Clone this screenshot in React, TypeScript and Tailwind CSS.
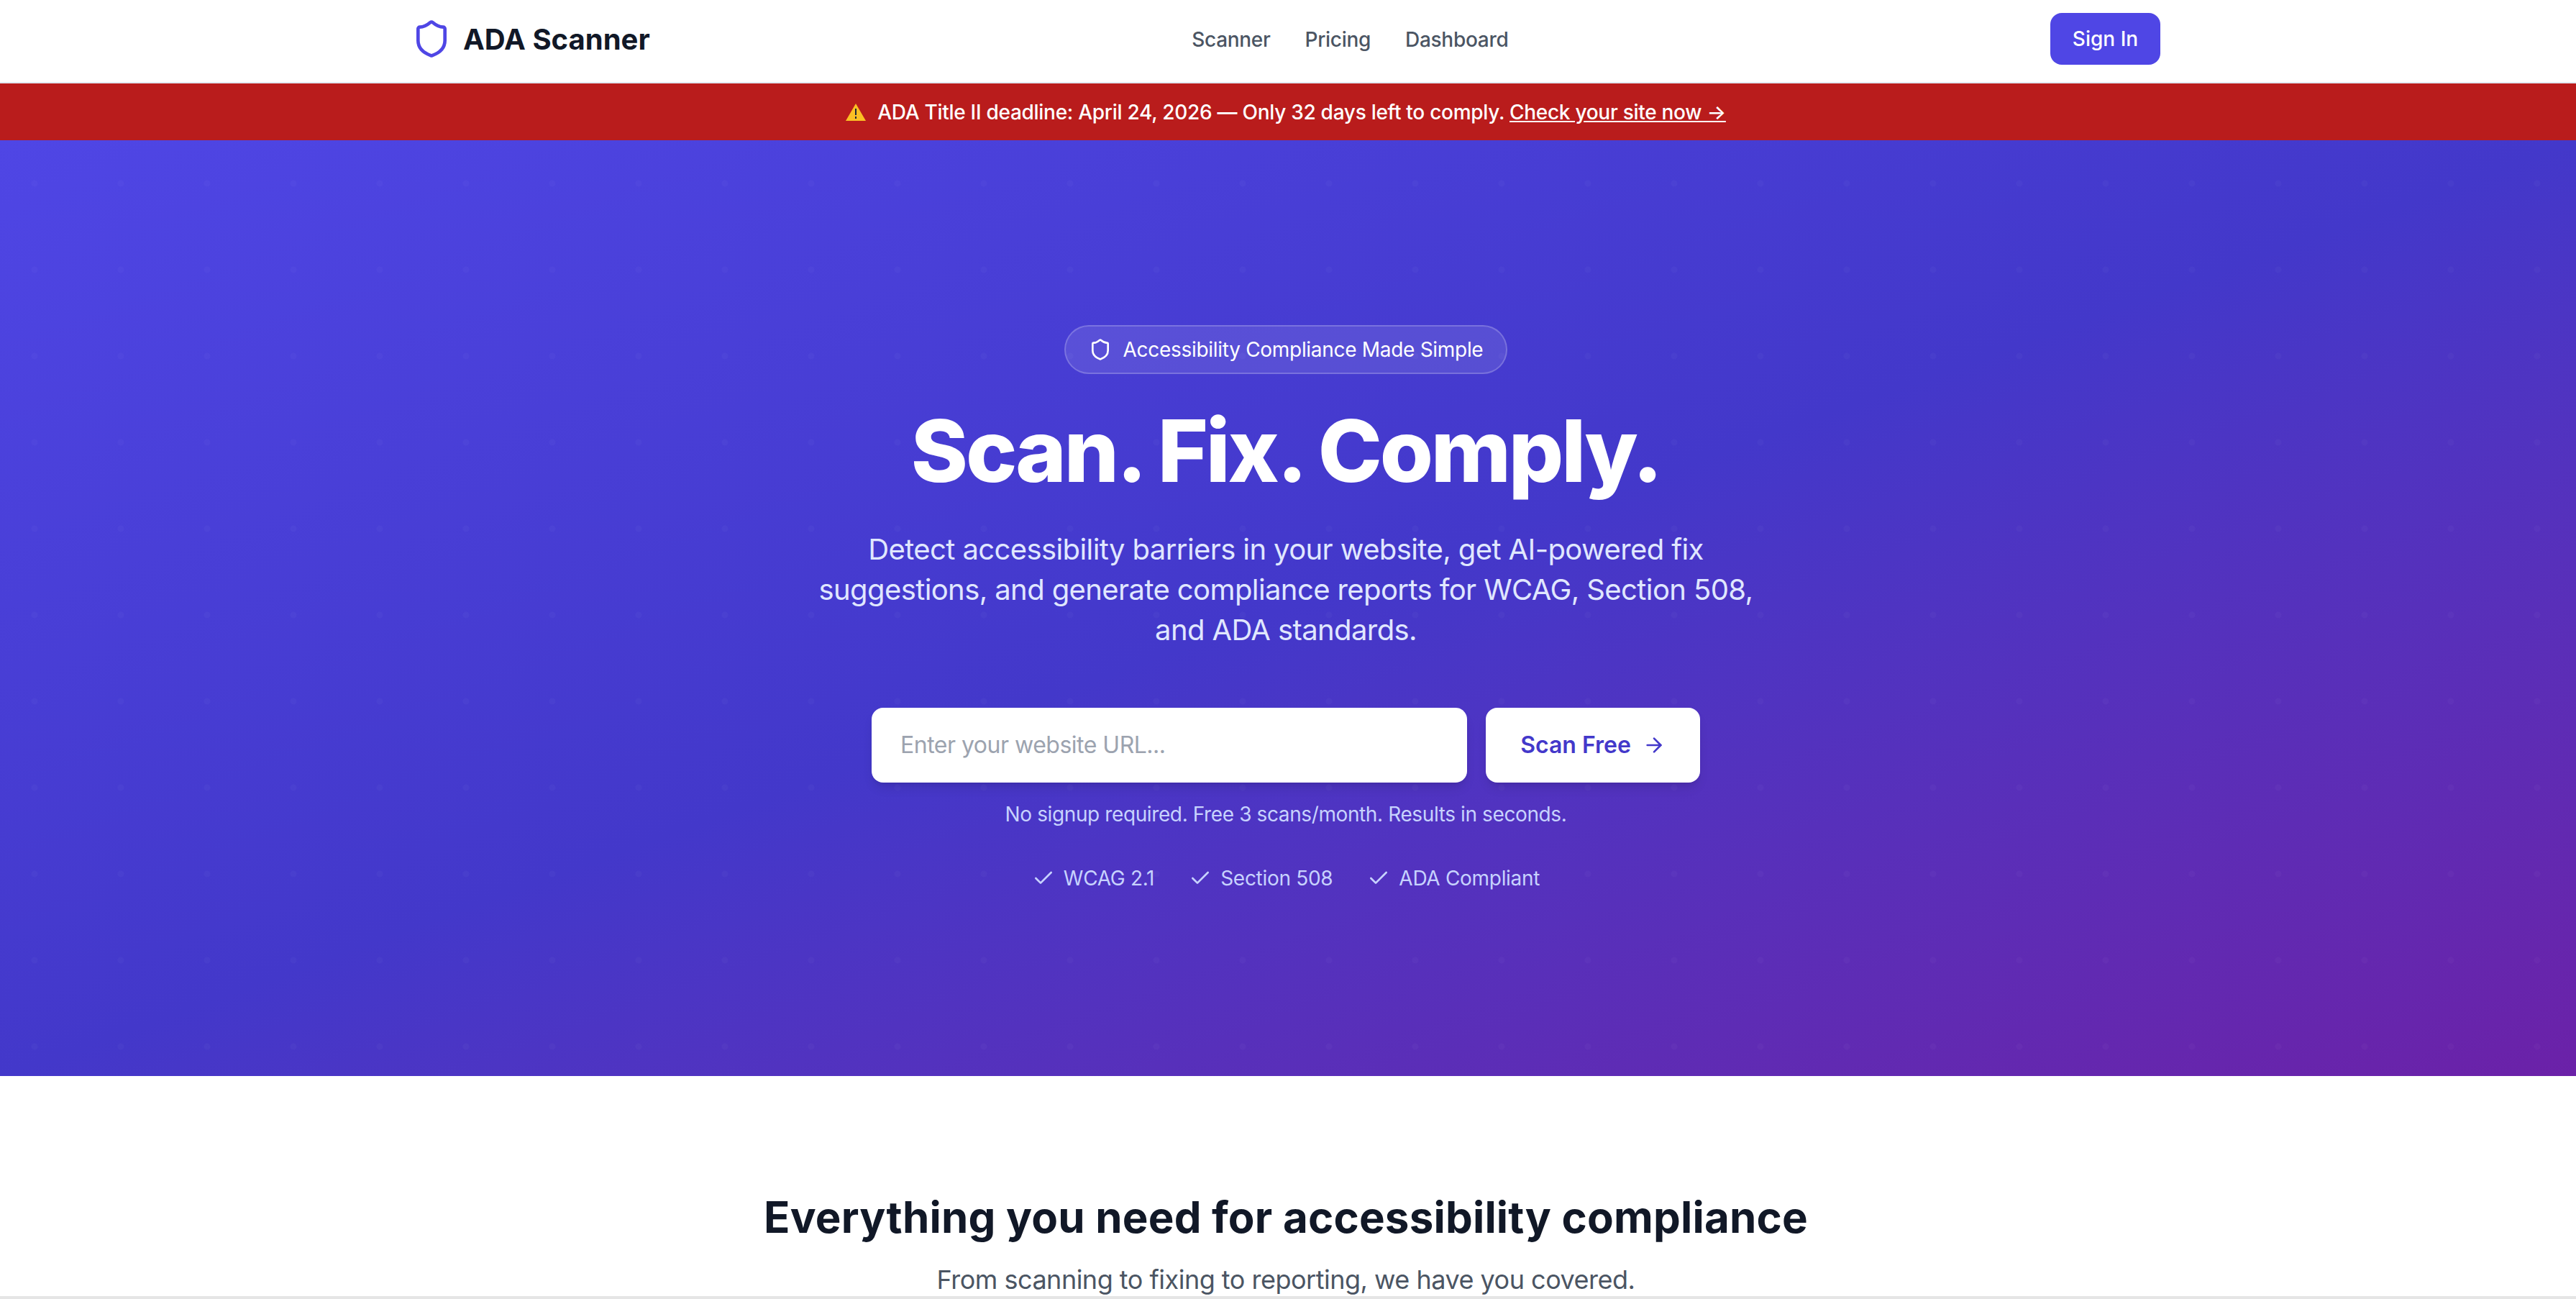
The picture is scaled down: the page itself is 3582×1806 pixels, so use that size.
import { ArrowRight, Check, Shield } from "lucide-react";

const badges = ["WCAG 2.1", "Section 508", "ADA Compliant"];

export default function App() {
  return (
    <div className="h-[1806px] overflow-hidden bg-white font-['Inter',sans-serif]">
      {/* nav */}
      <nav className="border-b-2 border-[#e2e8f0] bg-white pr-[6px]">
        <div className="mx-auto flex h-[114px] max-w-[2560px] items-center justify-between px-[64px] pb-[6px]">
          <div className="flex items-center gap-[16px]">
            <Shield className="h-[56px] w-[56px] text-[#4f46e5]" strokeWidth={2} />
            <span className="mt-[2px] text-[40px] font-bold text-[#111827]">ADA Scanner</span>
          </div>
          <div className="mt-[2px] flex items-center gap-[48px] text-[28px] font-medium tracking-[-0.3px] text-[#4b5563]">
            <a>Scanner</a>
            <a>Pricing</a>
            <a>Dashboard</a>
          </div>
          <button className="h-[72px] w-[153px] rounded-[16px] bg-[#4f46e5] text-[28px] font-medium text-white">
            Sign In
          </button>
        </div>
      </nav>

      {/* deadline banner */}
      <div className="flex h-[79px] items-center justify-center gap-[16px] bg-[#b91c1c] pr-[6px] text-[28px] font-medium tracking-[-0.28px] text-white">
        <svg viewBox="0 0 28 24" className="h-[24px] w-[28px]">
          <path d="M14 0 L28 24 L0 24 Z" fill="#fbbf24" />
          <rect x="13" y="7" width="2" height="9" fill="#1f2937" />
          <rect x="13" y="18" width="2" height="3" fill="#1f2937" />
        </svg>
        <p>
          ADA Title II deadline: April 24, 2026 — Only 32 days left to comply.{" "}
          <a className="underline">Check your site now →</a>
        </p>
      </div>

      {/* hero */}
      <section className="relative h-[1301px] bg-gradient-to-br from-[#4f46e5] via-[#4338ca] to-[#6b21a8] pt-[257px] pr-[6px] text-center text-white">
        <div className="absolute inset-0 bg-[radial-gradient(circle,rgba(255,255,255,0.025)_4px,transparent_5px)] bg-[size:120px_120px] bg-[position:-12px_0px]"></div>
        <div className="relative flex flex-col items-center">
          <div className="flex h-[68px] items-center gap-[16px] rounded-full border-2 border-white/20 bg-white/10 px-[32px] text-[28px] tracking-[-0.3px]">
            <Shield className="h-[32px] w-[32px]" strokeWidth={2} />
            Accessibility Compliance Made Simple
          </div>
          <h1 className="mt-[41px] text-[120px] leading-[132px] font-extrabold tracking-[-3.2px]">Scan. Fix. Comply.</h1>
          <p className="mt-[43px] max-w-[1344px] text-[40px] leading-[56px] tracking-[-0.6px] text-[#e0e7ff]">
            Detect accessibility barriers in your website, get AI-powered fix suggestions, and generate compliance
            reports for WCAG, Section 508, and ADA standards.
          </p>
          <div className="mt-[80px] flex w-[1152px] gap-[26px]">
            <div className="flex h-[104px] flex-1 items-center rounded-[16px] bg-white px-[40px] text-[32px] tracking-[-0.5px] text-[#9ca3af] shadow-lg">
              Enter your website URL...
            </div>
            <button className="flex h-[104px] w-[298px] items-center justify-center gap-[16px] rounded-[16px] bg-white text-[32px] font-semibold text-[#4338ca] shadow-lg">
              Scan Free
              <ArrowRight className="h-[32px] w-[32px]" strokeWidth={2} />
            </button>
          </div>
          <p className="mt-[24px] text-[28px] leading-[40px] tracking-[-0.39px] text-[#c7d2fe]">
            No signup required. Free 3 scans/month. Results in seconds.
          </p>
          <div className="mt-[49px] flex items-center gap-[48px] text-[28px] leading-[40px] tracking-[-0.3px] text-[#c7d2fe]">
            {badges.map((b) => (
              <span key={b} className="flex items-center gap-[12px]">
                <Check className="h-[32px] w-[32px]" strokeWidth={2} />
                {b}
              </span>
            ))}
          </div>
        </div>
      </section>

      {/* features header */}
      <section className="h-[306px] pt-[160px] pr-[6px] text-center">
        <h2 className="text-[60px] leading-[72px] font-bold tracking-[0.2px] text-[#111827]">
          Everything you need for accessibility compliance
        </h2>
        <p className="mt-[23px] text-[36px] leading-[56px] tracking-[-0.5px] text-[#4b5563]">
          From scanning to fixing to reporting, we have you covered.
        </p>
      </section>
      <div className="h-[4px] bg-[#e5e5e5]"></div>
    </div>
  );
}
